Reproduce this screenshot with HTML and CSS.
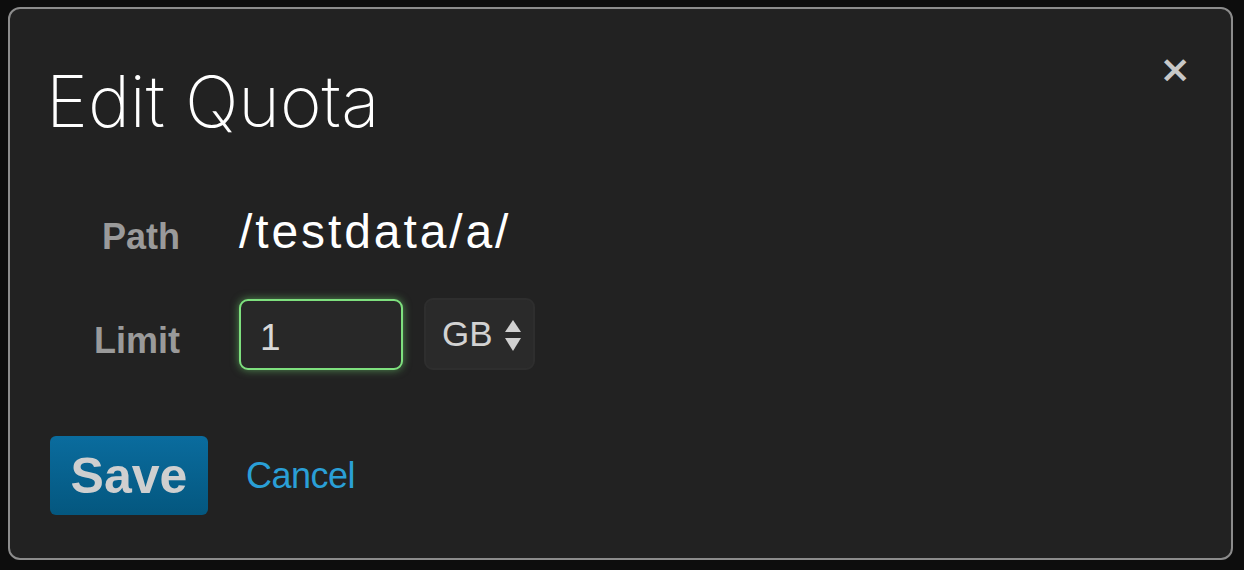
FILE: index.html
```html
<!DOCTYPE html>
<html>
<head>
<meta charset="utf-8">
<link rel="stylesheet" href="styles.css">
</head>
<body>
<div class="modal">
  <button class="close" type="button">&times;</button>
  <h1 class="title">Edit Quota</h1>
  <div class="form">
    <div class="label">Path</div>
    <div class="path">/testdata/a/</div>
    <div class="label label-limit">Limit</div>
    <div class="controls">
      <div class="input">1</div>
      <div class="select"><span>GB</span>
        <svg class="arrows" width="16" height="31" viewBox="0 0 16 31"><path d="M8 0 L16 12 L0 12 Z" fill="#d0d0d0"/><path d="M0 18 L16 18 L8 31 Z" fill="#d0d0d0"/></svg>
      </div>
    </div>
  </div>
  <div class="actions">
    <button class="btn-save" type="button">Save</button>
    <a class="cancel" href="#">Cancel</a>
  </div>
</div>
</body>
</html>
```
FILE: styles.css
```css
html, body {
  margin: 0;
  padding: 0;
  background: #0d0d0d;
  height: 570px;
  overflow: hidden;
}
body {
  font-family: "Liberation Sans", Arial, sans-serif;
  padding-top: 7px;
  padding-left: 8px;
}
.modal {
  position: relative;
  box-sizing: border-box;
  width: 1225px;
  height: 553px;
  border: 2px solid #8c8c8c;
  border-radius: 12px;
  background: #222222;
  padding: 47px 40px 0 40px;
}
.close {
  position: absolute;
  top: 41px;
  right: 40px;
  background: none;
  border: 0;
  padding: 0;
  color: #c8c8c8;
  font-family: "DejaVu Sans", sans-serif;
  font-weight: bold;
  font-size: 38px;
  line-height: 1;
}
.title {
  margin: 0 0 0 -4px;
  font-family: Inter, "Open Sans", sans-serif;
  font-weight: 200;
  font-size: 71px;
  line-height: 90px;
  color: #ffffff;
  letter-spacing: 0;
}
.form {
  display: grid;
  grid-template-columns: 130px auto;
  column-gap: 59px;
  row-gap: 39px;
  align-items: center;
  margin-top: 69px;
}
.label {
  text-align: right;
  color: #9a9a9a;
  font-weight: bold;
  font-size: 36px;
  line-height: 44px;
}
.label-limit {
  margin-top: 14px;
}
.path {
  color: #ffffff;
  font-size: 48px;
  letter-spacing: 2.9px;
  line-height: 44px;
  margin-top: -10px;
}
.controls {
  display: flex;
  align-items: center;
  gap: 21px;
}
.input {
  box-sizing: border-box;
  width: 164px;
  height: 71px;
  border: 2px solid #7ee07e;
  border-radius: 9px;
  background: #282828;
  box-shadow: 0 0 8px rgba(120, 230, 120, 0.55);
  color: #d8d8d8;
  font-size: 37px;
  line-height: 40px;
  padding: 17px 0 0 19px;
}
.select {
  box-sizing: border-box;
  width: 111px;
  height: 72px;
  border: 2px solid #2e2e2e;
  border-radius: 9px;
  background: #2a2a2a;
  color: #d2d2d2;
  font-size: 35px;
  display: flex;
  align-items: center;
  padding-left: 16px;
  gap: 12px;
}
.arrows {
  margin-top: 3px;
}
.actions {
  display: flex;
  align-items: center;
  gap: 38px;
  margin-top: 66px;
}
.btn-save {
  box-sizing: border-box;
  width: 158px;
  height: 79px;
  border: 0;
  border-radius: 6px;
  background: linear-gradient(#0a6c9e, #04577f);
  color: #cfcfcf;
  font-family: "Liberation Sans", Arial, sans-serif;
  font-weight: bold;
  font-size: 50px;
  padding: 0;
}
.cancel {
  color: #2a9fd6;
  text-decoration: none;
  font-size: 36px;
  letter-spacing: -0.5px;
}
```
